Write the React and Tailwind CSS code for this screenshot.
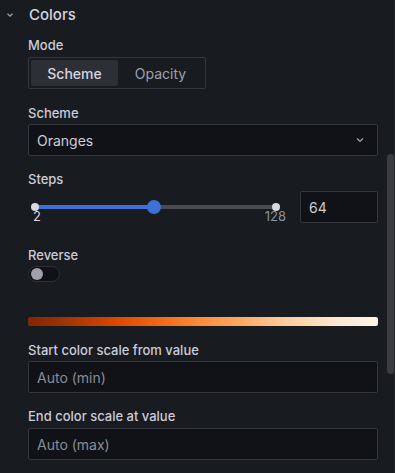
import React from "react";

const font = { fontFamily: "Inter, 'Noto Sans', sans-serif" };

function Label({ children, className = "" }) {
  return (
    <div className={"h-[18px] leading-[18px] text-[13px] font-medium text-[#ccccdc] " + className}>
      {children}
    </div>
  );
}

export default function App() {
  return (
    <div className="relative w-[395px] h-[473px] bg-[#181b1f] overflow-hidden" style={font}>
      <div className="h-[30px] flex items-center">
        <div className="w-[29px] flex justify-center pr-[9px]">
          <svg width="8" height="6" viewBox="0 0 8 6" fill="none">
            <path d="M1.5 1.8 L4 4.2 L6.5 1.8" stroke="#a0a1ab" strokeWidth="1.3" />
          </svg>
        </div>
        <div className="text-[15px] font-medium text-[#d5d6e0]">Colors</div>
      </div>

      <div className="pl-[28px] pr-[17px] flex flex-col">
        <Label className="mt-[6px]">Mode</Label>
        <div className="mt-[3px] w-[178px] h-[32px] border border-[#34363c] rounded-[2px] p-[2px] flex">
          <div className="w-[87px] h-full bg-[#2c2f35] rounded-[2px] flex items-center justify-center text-[14px] font-medium text-[#d5d6e0]">
            Scheme
          </div>
          <div className="flex-1 h-full flex items-center justify-center text-[14px] text-[#9fa1ac]">
            Opacity
          </div>
        </div>

        <Label className="mt-[15px]">Scheme</Label>
        <div className="mt-[2px] h-[32px] bg-[#111217] border border-[#34363c] rounded-[2px] flex items-center pl-[8px] pr-[12px]">
          <div className="flex-1 text-[14px] text-[#ccccdc]">Oranges</div>
          <svg width="10" height="6" viewBox="0 0 10 6" fill="none">
            <path d="M2 1.5 L5 4.3 L8 1.5" stroke="#9fa1ac" strokeWidth="1.3" />
          </svg>
        </div>

        <Label className="mt-[14px]">Steps</Label>
        <div className="mt-[3px] h-[32px] flex gap-[16px]">
          <div className="w-[256px] flex flex-col">
            <div className="mt-[12px] h-[8px] ml-[3px] mr-[4px] relative">
              <div className="absolute left-[4px] right-[4px] top-[2px] h-[4px] bg-[#4a4c52] rounded-full" />
              <div className="absolute left-[4px] top-[2px] h-[4px] bg-[#3d71d9] rounded-l-full" style={{ width: "47.8%" }} />
              <div className="absolute left-0 top-0 w-[8px] h-[8px] rounded-full bg-[#d8d9e0]" />
              <div className="absolute right-0 top-0 w-[8px] h-[8px] rounded-full bg-[#d8d9e0]" />
              <div
                className="absolute top-[-3px] w-[14px] h-[14px] rounded-full bg-[#3d71d9]"
                style={{ left: "calc(4px + 47.8% - 7px)" }}
              />
            </div>
            <div className="flex justify-between mt-[5px] mr-[-2px] text-[13px] leading-[16px]">
              <span className="pl-[5px] text-[#d5d6e0]">2</span>
              <span className="text-[#8e909b]">128</span>
            </div>
          </div>
          <div className="flex-1 h-[32px] bg-[#111217] border border-[#34363c] rounded-[2px] flex items-center pl-[8px] text-[14px] text-[#ccccdc]">
            64
          </div>
        </div>

        <Label className="mt-[23px]">Reverse</Label>
        <div className="mt-[2px] w-[32px] h-[16px] rounded-full bg-[#111217] border border-[#2e3036] relative">
          <div className="absolute left-[2px] top-[1px] w-[12px] h-[12px] rounded-full bg-[#9fa0aa]" />
        </div>

        <div
          className="mt-[35px] h-[9px] rounded-[2px]"
          style={{
            background:
              "linear-gradient(to right, #7f2704, #a63603, #d94801, #f16913, #fd8d3c, #fdae6b, #fdd0a2, #fee6ce, #fff5eb)",
          }}
        />

        <Label className="mt-[15px]">Start color scale from value</Label>
        <div className="mt-[2px] h-[32px] bg-[#111217] border border-[#34363c] rounded-[2px] flex items-center pl-[8px] text-[14px] text-[#8a8c96]">
          Auto (min)
        </div>

        <Label className="mt-[14px]">End color scale at value</Label>
        <div className="mt-[3px] h-[32px] bg-[#111217] border border-[#34363c] rounded-[2px] flex items-center pl-[8px] text-[14px] text-[#8a8c96]">
          Auto (max)
        </div>
      </div>

      <div className="absolute left-[387px] top-[154px] w-[7px] h-[220px] rounded-full bg-[#3a3c42]" />
      <div className="absolute right-0 top-0 w-[1px] h-full bg-[#22242a]" />
    </div>
  );
}
